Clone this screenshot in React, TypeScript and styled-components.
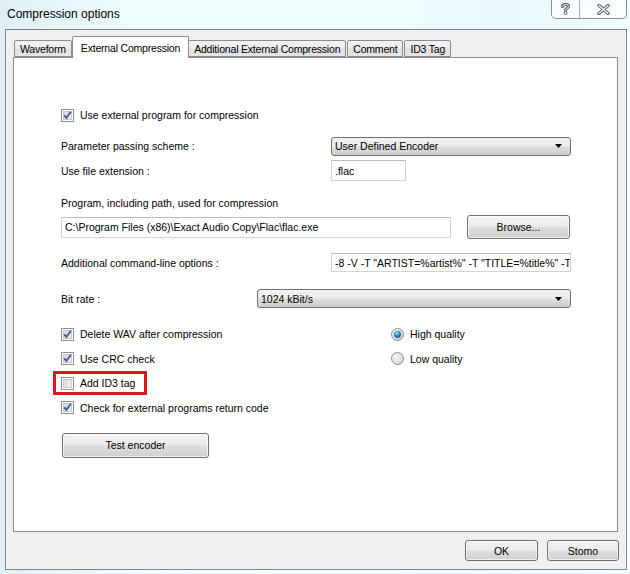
import React from 'react'
import styled, { createGlobalStyle } from 'styled-components'

const Global = createGlobalStyle`
  html, body {
    margin: 0;
    padding: 0;
    background: #eaf8fb;
  }
  body {
    font-family: "Liberation Sans", Arial, sans-serif;
    font-size: 10.5px;
    color: #000;
  }
`

const Window = styled.div`
  width: 630px;
  height: 574px;
  display: flex;
  flex-direction: column;
  background: linear-gradient(90deg, #dfeff6 0%, #eefcfe 20%, #f0feff 55%, #e9f9fc 80%, #f2fdff 100%);
  overflow: hidden;
`

const TitleBar = styled.div`
  height: 29px;
  display: flex;
  justify-content: space-between;
  align-items: flex-start;
  padding: 0 3px 0 7px;
  flex-shrink: 0;
`

const Title = styled.div`
  font-size: 12px;
  line-height: 28px;
  color: #000;
`

const Captions = styled.div`
  display: flex;
  height: 18px;
  border: 1px solid #8b8f94;
  border-top: none;
  border-radius: 0 0 5px 5px;
  background: linear-gradient(180deg, rgba(255, 255, 255, 0.5), rgba(255, 255, 255, 0.85));
  overflow: hidden;
`

const CaptionButton = styled.div<{ $w: number }>`
  width: ${(p) => p.$w}px;
  display: flex;
  align-items: center;
  justify-content: center;
  & + & {
    border-left: 1px solid #a9b0b6;
  }
`

const Frame = styled.div`
  margin: 0 3px 0 5px;
  height: 541px;
  box-sizing: border-box;
  border: 1px solid #858585;
  background: #f0f0f0;
  padding: 6px 8px 0 7px;
  display: flex;
  flex-direction: column;
`

const TabStrip = styled.div`
  height: 21px;
  display: flex;
  align-items: flex-end;
  padding-left: 1px;
  position: relative;
  z-index: 1;
`

const Tab = styled.div<{ $active?: boolean }>`
  box-sizing: border-box;
  height: ${(p) => (p.$active ? 22 : 17)}px;
  margin-bottom: ${(p) => (p.$active ? -1 : 0)}px;
  margin-left: ${(p) => (p.$active ? -1 : 0)}px;
  margin-right: ${(p) => (p.$active ? -1 : 1)}px;
  padding: 0 ${(p) => (p.$active ? 8 : 5)}px;
  display: flex;
  align-items: center;
  white-space: nowrap;
  letter-spacing: -0.2px;
  border: 1px solid #898c95;
  border-bottom: ${(p) => (p.$active ? 'none' : '1px solid #898c95')};
  background: ${(p) => (p.$active ? '#fff' : 'linear-gradient(180deg, #f2f2f2 0%, #ebebeb 50%, #dfdfdf 51%, #e6e6e6 100%)')};
  border-radius: 2px 2px 0 0;
`

const Panel = styled.div`
  box-sizing: border-box;
  height: 475px;
  border: 1px solid #898c95;
  background: #fff;
  padding: 50px 0 0 47px;
  display: flex;
  flex-direction: column;
`

const CheckRow = styled.div`
  height: 14px;
  display: inline-flex;
  align-items: center;
  gap: 6px;
  white-space: nowrap;
`

const FormRow = styled.div<{ $top: number; $h: number; $label: number }>`
  margin-top: ${(p) => p.$top}px;
  height: ${(p) => p.$h}px;
  display: grid;
  grid-template-columns: ${(p) => p.$label}px auto;
  align-items: center;
`

const LabelRow = styled.div<{ $top: number }>`
  margin-top: ${(p) => p.$top}px;
  height: 14px;
  display: flex;
  align-items: center;
`

const Select = styled.div<{ $w: number }>`
  box-sizing: border-box;
  width: ${(p) => p.$w}px;
  height: 19px;
  border: 1px solid #707070;
  border-radius: 3px;
  background: linear-gradient(180deg, #f2f2f2 0%, #ebebeb 48%, #dddddd 52%, #cfcfcf 100%);
  display: flex;
  align-items: center;
  justify-content: space-between;
  padding: 0 8px 0 3px;
  white-space: nowrap;
`

const TextBox = styled.div<{ $w: number; $h?: number }>`
  box-sizing: border-box;
  width: ${(p) => p.$w}px;
  height: ${(p) => p.$h ?? 21}px;
  border: 1px solid #d3d3d3;
  border-top-color: #b9bcc2;
  background: #fff;
  display: flex;
  align-items: center;
  padding: 0 2px 0 3px;
  white-space: nowrap;
  overflow: hidden;
`

const Button = styled.div<{ $w: number; $h: number }>`
  box-sizing: border-box;
  width: ${(p) => p.$w}px;
  height: ${(p) => p.$h}px;
  border: 1px solid #707070;
  border-radius: 3px;
  background: linear-gradient(180deg, #f2f2f2 0%, #ebebeb 48%, #dddddd 52%, #cfcfcf 100%);
  box-shadow: inset 0 0 0 1px rgba(255, 255, 255, 0.7);
  display: flex;
  align-items: center;
  justify-content: center;
`

const ProgramRow = styled.div`
  margin-top: 5px;
  height: 24px;
  display: flex;
  align-items: center;
  gap: 16px;
`

const OptionsGrid = styled.div`
  margin-top: 19px;
  display: grid;
  grid-template-columns: 330px auto;
  grid-template-rows: repeat(4, 14px);
  row-gap: 10.5px;
  align-items: center;
`

const Marked = styled.div`
  display: inline-flex;
  justify-self: start;
  border: 3px solid #e2131c;
  padding: 2px 9px 2px 5px;
  margin: -5px 0 -5px -8px;
`

const TestRow = styled.div`
  margin-top: 18px;
  padding-left: 1px;
`

const Footer = styled.div`
  flex: 1;
  display: flex;
  justify-content: flex-end;
  align-items: flex-start;
  gap: 9px;
  padding-top: 8px;
  margin-right: -1px;
`

const Checkbox = ({ checked }: { checked?: boolean }) => (
  <svg width="13" height="13" viewBox="0 0 13 13">
    <defs>
      <linearGradient id="cbg" x1="0" y1="0" x2="1" y2="1">
        <stop offset="0" stopColor="#d2d4d8" />
        <stop offset="1" stopColor="#f7f7f7" />
      </linearGradient>
    </defs>
    <rect x="0.5" y="0.5" width="12" height="12" fill="#fff" stroke="#8e8f8f" />
    <rect x="2.5" y="2.5" width="8" height="8" fill="url(#cbg)" stroke="#c6c8cc" />
    {checked && (
      <path d="M3.3 6.4 L5.4 9 L9.8 2.8" fill="none" stroke="#3d5a94" strokeWidth="1.9" strokeLinejoin="round" />
    )}
  </svg>
)

const Radio = ({ checked }: { checked?: boolean }) => (
  <svg width="13" height="13" viewBox="0 0 13 13">
    <defs>
      <radialGradient id="rbg" cx="0.35" cy="0.35" r="0.8">
        <stop offset="0" stopColor="#f6f6f6" />
        <stop offset="1" stopColor="#cfd1d4" />
      </radialGradient>
      <radialGradient id="rdot" cx="0.4" cy="0.3" r="0.8">
        <stop offset="0" stopColor="#a9e6fd" />
        <stop offset="0.5" stopColor="#2b8bc9" />
        <stop offset="1" stopColor="#104c7c" />
      </radialGradient>
    </defs>
    <circle cx="6.5" cy="6.5" r="6" fill="url(#rbg)" stroke="#8e8f8f" />
    {checked && <circle cx="6.5" cy="6.5" r="3.3" fill="url(#rdot)" stroke="#1f5d8c" strokeWidth="0.5" />}
  </svg>
)

const Arrow = () => (
  <svg width="7" height="4" viewBox="0 0 7 4">
    <polygon points="0,0 7,0 3.5,4" fill="#000" />
  </svg>
)

const HelpGlyph = () => (
  <svg width="9" height="12" viewBox="0 0 9 12">
    <path d="M1.5 3.5 C1.5 0.8 7.5 0.8 7.5 3.5 C7.5 5.3 4.5 5.3 4.5 7.4" fill="none" stroke="#5b6066" strokeWidth="3" strokeLinecap="round" />
    <path d="M1.5 3.5 C1.5 0.8 7.5 0.8 7.5 3.5 C7.5 5.3 4.5 5.3 4.5 7.4" fill="none" stroke="#fff" strokeWidth="1" strokeLinecap="round" />
    <circle cx="4.5" cy="10.2" r="1.5" fill="#fff" stroke="#5b6066" strokeWidth="1" />
  </svg>
)

const CloseGlyph = () => (
  <svg width="13" height="11" viewBox="0 0 13 11">
    <path d="M2 1.5 L11 9.5 M11 1.5 L2 9.5" stroke="#5b6066" strokeWidth="3.2" strokeLinecap="square" />
    <path d="M2 1.5 L11 9.5 M11 1.5 L2 9.5" stroke="#fff" strokeWidth="1.2" strokeLinecap="square" />
  </svg>
)

const tabs = ['Waveform', 'External Compression', 'Additional External Compression', 'Comment', 'ID3 Tag']

export default function App() {
  return (
    <Window>
      <Global />
      <TitleBar>
        <Title>Compression options</Title>
        <Captions>
          <CaptionButton $w={27}>
            <HelpGlyph />
          </CaptionButton>
          <CaptionButton $w={46}>
            <CloseGlyph />
          </CaptionButton>
        </Captions>
      </TitleBar>
      <Frame>
        <TabStrip>
          {tabs.map((t, i) => (
            <Tab key={t} $active={i === 1}>
              {t}
            </Tab>
          ))}
        </TabStrip>
        <Panel>
          <CheckRow>
            <Checkbox checked />
            Use external program for compression
          </CheckRow>
          <FormRow $top={14} $h={20} $label={270}>
            <span>Parameter passing scheme :</span>
            <Select $w={240}>
              User Defined Encoder
              <Arrow />
            </Select>
          </FormRow>
          <FormRow $top={4} $h={21} $label={270}>
            <span>Use file extension :</span>
            <TextBox $w={75}>.flac</TextBox>
          </FormRow>
          <LabelRow $top={15}>Program, including path, used for compression</LabelRow>
          <ProgramRow>
            <TextBox $w={390}>C:\Program Files (x86)\Exact Audio Copy\Flac\flac.exe</TextBox>
            <Button $w={103} $h={24}>Browse...</Button>
          </ProgramRow>
          <FormRow $top={14} $h={19} $label={270}>
            <span>Additional command-line options :</span>
            <TextBox $w={240} $h={19}>
              -8 -V -T "ARTIST=%artist%" -T "TITLE=%title%" -T "ALBUM=%albumtitle%"
            </TextBox>
          </FormRow>
          <FormRow $top={17} $h={19} $label={196}>
            <span>Bit rate :</span>
            <Select $w={314}>
              1024 kBit/s
              <Arrow />
            </Select>
          </FormRow>
          <OptionsGrid>
            <CheckRow>
              <Checkbox checked />
              Delete WAV after compression
            </CheckRow>
            <CheckRow>
              <Radio checked />
              High quality
            </CheckRow>
            <CheckRow>
              <Checkbox checked />
              Use CRC check
            </CheckRow>
            <CheckRow>
              <Radio />
              Low quality
            </CheckRow>
            <Marked>
              <CheckRow>
                <Checkbox />
                Add ID3 tag
              </CheckRow>
            </Marked>
            <span />
            <CheckRow>
              <Checkbox checked />
              Check for external programs return code
            </CheckRow>
          </OptionsGrid>
          <TestRow>
            <Button $w={147} $h={25}>Test encoder</Button>
          </TestRow>
        </Panel>
        <Footer>
          <Button $w={73} $h={21}>OK</Button>
          <Button $w={72} $h={21}>Stomo</Button>
        </Footer>
      </Frame>
    </Window>
  )
}
